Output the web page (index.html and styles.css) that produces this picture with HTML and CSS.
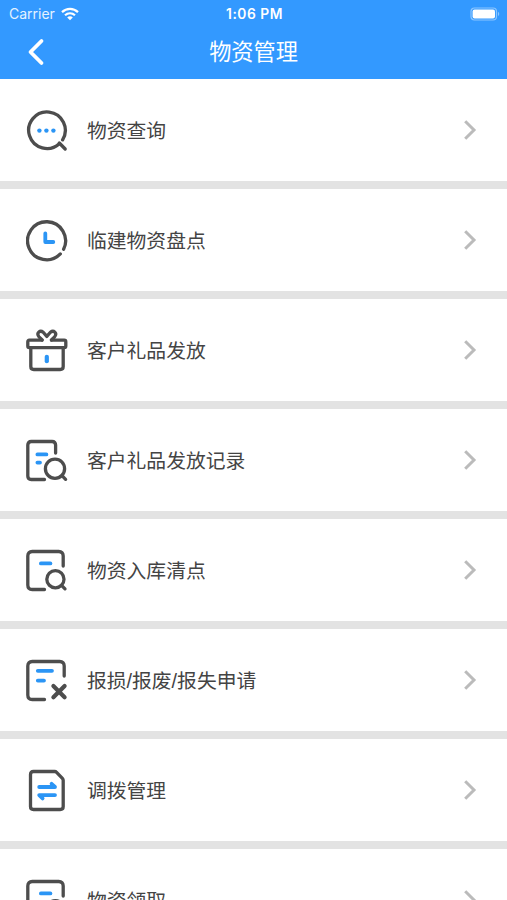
FILE: index.html
```html
<!DOCTYPE html>
<html lang="zh-CN">
<head>
  <meta charset="UTF-8">
  <meta name="viewport" content="width=device-width, initial-scale=1.0">
  <title>物资管理</title>
  <link rel="stylesheet" href="styles.css">
</head>
<body>
<header class="header">
  <div class="status-bar">
    <div class="carrier">
      <span>Carrier</span>
      <svg class="wifi" width="18" height="14" viewBox="0 0 18 14">
        <path d="M1 5.1 C5.6 .7 12.4 .7 17 5.1"/>
        <path d="M4 8.3 C6.9 5.6 11.1 5.6 14 8.3"/>
        <path class="wifi-dot" d="M6.2 10.4 C7.8 9 10.2 9 11.8 10.4 L9 13.3 Z"/>
      </svg>
    </div>
    <div class="time">1:06 PM</div>
    <svg class="battery" width="30" height="14" viewBox="0 0 30 14">
      <rect class="battery-case" x="1" y="1" width="25.5" height="12" rx="3.5"/>
      <rect class="battery-level" x="2.6" y="2.4" width="22.4" height="9.2" rx="2"/>
      <path class="battery-tip" d="M28 4.8 Q30.5 7 28 9.2 Z"/>
    </svg>
  </div>
  <div class="nav-bar">
    <svg class="back" width="18" height="28" viewBox="0 0 18 28">
      <path d="M14.5 3 L3.5 14 L14.5 25"/>
    </svg>
    <h1>物资管理</h1>
  </div>
</header>

<main class="menu">
  <div class="item">
    <svg class="icon" viewBox="0 0 42 43">
      <path d="M36.6 30.8 A18.3 18.3 0 1 0 33.3 34.8"/>
      <path d="M33.3 34 L39.2 40"/>
      <g class="dots">
        <circle cx="13.4" cy="21.6" r="2.2"/>
        <circle cx="20.4" cy="21.6" r="2.2"/>
        <circle cx="27.4" cy="21.6" r="2.2"/>
      </g>
    </svg>
    <span class="label">物资查询</span>
    <svg class="arrow" viewBox="0 0 14 22"><path d="M2.2 2.2 L11 11 L2.2 19.8"/></svg>
  </div>

  <div class="item">
    <svg class="icon" viewBox="0 0 42 43">
      <path d="M37.6 30.2 A19 19 0 1 0 34.3 34.9"/>
      <path class="blue" d="M19.3 14.5 V23 H27.3"/>
    </svg>
    <span class="label">临建物资盘点</span>
    <svg class="arrow" viewBox="0 0 14 22"><path d="M2.2 2.2 L11 11 L2.2 19.8"/></svg>
  </div>

  <div class="item">
    <svg class="icon" viewBox="0 0 42 43">
      <path d="M15.8 11.2 H3.3 Q1.8 11.2 1.8 12.7 V17 Q1.8 18.6 3.3 18.6 H38.3 Q39.8 18.6 39.8 17 V12.7 Q39.8 11.2 38.3 11.2 H25.8"/>
      <path d="M4.8 19 V37.5 Q4.8 40.5 7.8 40.5 H34.2 Q37.2 40.5 37.2 37.5 V19"/>
      <path d="M16.2 11 L13 7.8 C10 4 14 .6 17.2 3.2 L20.8 7.4 L24.4 3.2 C27.6 .6 31.6 4 28.6 7.8 L25.4 11"/>
      <path class="blue bar" d="M20.8 27.8 V32.2"/>
    </svg>
    <span class="label">客户礼品发放</span>
    <svg class="arrow" viewBox="0 0 14 22"><path d="M2.2 2.2 L11 11 L2.2 19.8"/></svg>
  </div>

  <div class="item">
    <svg class="icon" viewBox="0 0 42 43">
      <path d="M29.6 14 V6 Q29.6 2.5 26.1 2.5 H5.3 Q1.8 2.5 1.8 6 V37 Q1.8 40.5 5.3 40.5 H18.5"/>
      <circle cx="29" cy="29.7" r="9.6"/>
      <path d="M36 36.7 L39.6 40.3"/>
      <path class="blue" d="M11.4 15.4 H20.4 M11.4 23.6 H14"/>
    </svg>
    <span class="label">客户礼品发放记录</span>
    <svg class="arrow" viewBox="0 0 14 22"><path d="M2.2 2.2 L11 11 L2.2 19.8"/></svg>
  </div>

  <div class="item">
    <svg class="icon" viewBox="0 0 42 43">
      <path d="M37.2 17 V7 Q37.2 2.5 32.7 2.5 H6.3 Q1.8 2.5 1.8 7 V36 Q1.8 40.5 6.3 40.5 H18.5"/>
      <circle cx="29.4" cy="30.2" r="8.6"/>
      <path d="M35.8 36.6 L39 39.8"/>
      <path class="blue" d="M14.9 14.4 H24.4"/>
    </svg>
    <span class="label">物资入库清点</span>
    <svg class="arrow" viewBox="0 0 14 22"><path d="M2.2 2.2 L11 11 L2.2 19.8"/></svg>
  </div>

  <div class="item">
    <svg class="icon" viewBox="0 0 42 43">
      <path d="M38.2 17 V7 Q38.2 2.5 33.7 2.5 H6.3 Q1.8 2.5 1.8 7 V36 Q1.8 40.5 6.3 40.5 H18.5"/>
      <path class="cross" d="M27.4 27 L38.6 38.2 M38.6 27 L27.4 38.2"/>
      <path class="blue" d="M11.8 11.8 H26 M11.8 21.6 H18"/>
    </svg>
    <span class="label">报损/报废/报失申请</span>
    <svg class="arrow" viewBox="0 0 14 22"><path d="M2.2 2.2 L11 11 L2.2 19.8"/></svg>
  </div>

  <div class="item">
    <svg class="icon" viewBox="0 0 42 43">
      <path d="M7.5 2.5 H28.6 Q29.8 2.5 30.6 3.3 L36.4 9.3 Q37.2 10.1 37.2 11.3 V37.5 Q37.2 40.5 34.2 40.5 H7.5 Q4.5 40.5 4.5 37.5 V5.5 Q4.5 2.5 7.5 2.5 Z"/>
      <path class="blue" d="M13.2 18 H29 L25.6 14.8 M29 26.1 H13.2 L16.6 29.4"/>
    </svg>
    <span class="label">调拨管理</span>
    <svg class="arrow" viewBox="0 0 14 22"><path d="M2.2 2.2 L11 11 L2.2 19.8"/></svg>
  </div>

  <div class="item">
    <svg class="icon" viewBox="0 0 42 43">
      <path d="M37.2 17 V7 Q37.2 2.5 32.7 2.5 H6.3 Q1.8 2.5 1.8 7 V36 Q1.8 40.5 6.3 40.5 H18.5"/>
      <circle cx="29.4" cy="30.2" r="8.6"/>
      <path d="M35.8 36.6 L39 39.8"/>
      <path class="blue" d="M14.9 14.4 H24.4"/>
    </svg>
    <span class="label">物资领取</span>
    <svg class="arrow" viewBox="0 0 14 22"><path d="M2.2 2.2 L11 11 L2.2 19.8"/></svg>
  </div>
</main>
</body>
</html>
```
FILE: styles.css
```css
* {
  box-sizing: border-box;
}
body {
  margin: 0;
  height: 100vh;
  overflow: hidden;
  background-color: #fff;
  font-family: "Liberation Sans", "Noto Sans CJK SC", sans-serif;
  color: #444;
}
svg {
  display: block;
  flex-shrink: 0;
  fill: none;
  stroke-linecap: round;
  stroke-linejoin: round;
}
.header {
  height: 79px;
  background-color: #3399ff;
  color: #fff;
}
.status-bar {
  display: grid;
  grid-template-columns: 1fr auto 1fr;
  align-items: center;
  height: 27px;
  padding: 0 7px 0 9px;
  font-family: Inter, sans-serif;
  font-size: 14px;
}
.carrier {
  display: flex;
  align-items: center;
  gap: 6px;
  color: #e4f2ff;
}
.wifi {
  stroke: #fff;
  stroke-width: 2.2;
  stroke-linecap: butt;
}
.wifi-dot {
  fill: #fff;
  stroke: none;
}
.time {
  font-size: 13.8px;
  font-weight: 600;
  letter-spacing: 0.5px;
}
.battery {
  justify-self: end;
}
.battery-case {
  stroke: #8cc6ff;
  stroke-width: 1.2;
}
.battery-level {
  fill: #fff;
}
.battery-tip {
  fill: #8cc6ff;
}
.nav-bar {
  display: grid;
  grid-template-columns: 1fr auto 1fr;
  align-items: center;
  height: 50px;
}
.back {
  margin-left: 27px;
  stroke: #fff;
  stroke-width: 3.8;
}
.nav-bar h1 {
  margin: 2px 0 0;
  font-size: 22.2px;
  font-weight: 400;
  line-height: 32px;
}
.item {
  display: flex;
  align-items: center;
  height: 110px;
  padding: 0 30px 0 26px;
  border-bottom: 8px solid #e3e3e3;
}
.icon {
  width: 42px;
  height: 43px;
  margin: 1px 19px 0 0;
  stroke: #4d4d4d;
  stroke-width: 3.3;
}
.icon .blue {
  stroke: #2b95f5;
  stroke-width: 3.8;
}
.icon .bar {
  stroke-width: 4.2;
}
.icon .cross {
  stroke-width: 4.2;
}
.icon .dots {
  fill: #2b95f5;
  stroke: none;
}
.label {
  flex: 1;
  margin-top: 1px;
  font-size: 19.8px;
  line-height: 30px;
}
.arrow {
  width: 14px;
  height: 22px;
  stroke: #bbb;
  stroke-width: 3;
  stroke-linecap: butt;
  stroke-linejoin: miter;
}
```
